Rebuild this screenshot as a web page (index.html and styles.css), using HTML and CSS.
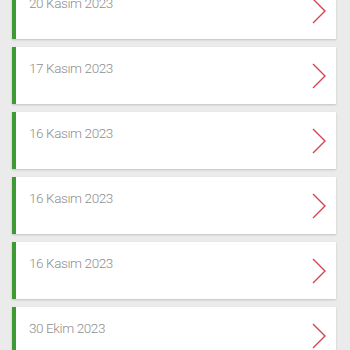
FILE: index.html
```html
<!DOCTYPE html>
<html lang="tr">
<head>
<meta charset="utf-8">
<link rel="stylesheet" href="styles.css">
</head>
<body>
<div class="list">
  <div class="card"><span class="date">20 Kasım 2023</span><svg class="chev" viewBox="0 0 14 26" width="14" height="26"><path d="M1 1 L13 13 L1 25" /></svg></div>
  <div class="card"><span class="date">17 Kasım 2023</span><svg class="chev" viewBox="0 0 14 26" width="14" height="26"><path d="M1 1 L13 13 L1 25" /></svg></div>
  <div class="card"><span class="date">16 Kasım 2023</span><svg class="chev" viewBox="0 0 14 26" width="14" height="26"><path d="M1 1 L13 13 L1 25" /></svg></div>
  <div class="card"><span class="date">16 Kasım 2023</span><svg class="chev" viewBox="0 0 14 26" width="14" height="26"><path d="M1 1 L13 13 L1 25" /></svg></div>
  <div class="card"><span class="date">16 Kasım 2023</span><svg class="chev" viewBox="0 0 14 26" width="14" height="26"><path d="M1 1 L13 13 L1 25" /></svg></div>
  <div class="card"><span class="date">30 Ekim 2023</span><svg class="chev" viewBox="0 0 14 26" width="14" height="26"><path d="M1 1 L13 13 L1 25" /></svg></div>
</div>
</body>
</html>
```
FILE: styles.css
```css
html, body {
  margin: 0;
  padding: 0;
  background: #ebebeb;
  height: 350px;
  overflow: hidden;
}
.list {
  display: flex;
  flex-direction: column;
  gap: 8px;
  padding: 0 14px 0 12px;
  margin-top: -18px;
}
.card {
  height: 57px;
  box-sizing: border-box;
  background: #ffffff;
  border-left: 4px solid #3f9a35;
  box-shadow: 0 1px 2px rgba(0,0,0,0.18);
  display: flex;
  align-items: flex-start;
  justify-content: space-between;
  padding: 11px 10px 0 13px;
  position: relative;
}
.date {
  font-family: Roboto, "Noto Sans", sans-serif;
  font-weight: 300;
  font-size: 13.5px;
  line-height: 20px;
  color: #8f8f8f;
  letter-spacing: -0.4px;
}
.chev {
  align-self: center;
  margin-top: -11px;
}
.chev path {
  fill: none;
  stroke: #d3444e;
  stroke-width: 1.4;
}
```
